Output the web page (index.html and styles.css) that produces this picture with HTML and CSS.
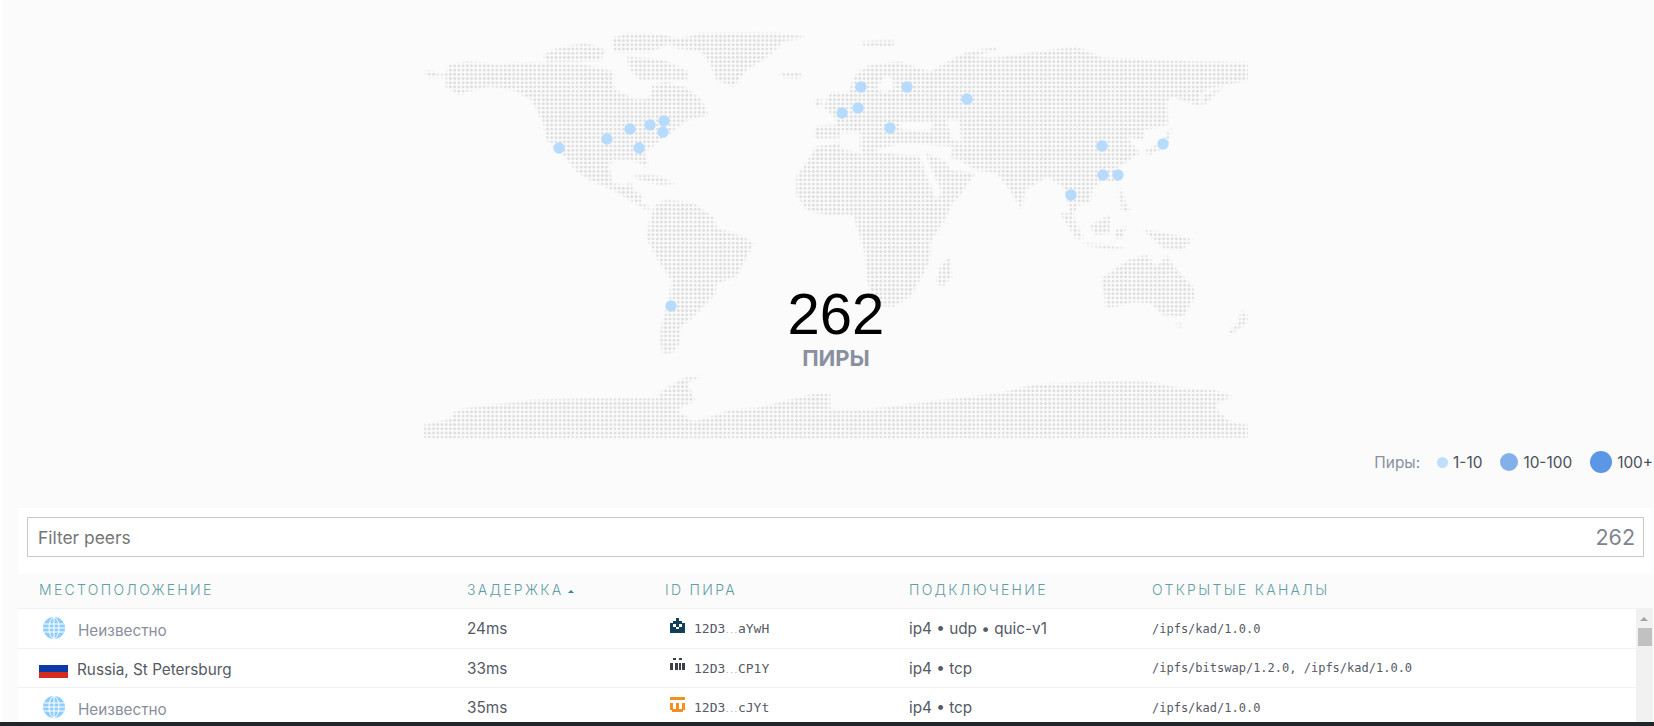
FILE: index.html
```html
<!DOCTYPE html>
<html lang="ru">
<head>
    <meta charset="UTF-8">
    <title>Пиры</title>
    <link rel="stylesheet" href="styles.css">
</head>
<body>
    <div class="page">
        <section class="map-wrap">
            <svg class="map" viewBox="424 30 824 410" width="824" height="410">
                <defs>
                    <pattern id="dots" x="423" y="30" width="4.22" height="4.22" patternUnits="userSpaceOnUse">
                        <circle cx="2.1" cy="2.1" r="1.45" fill="#dddddd"></circle>
                    </pattern>
                    <filter id="soft"><feGaussianBlur stdDeviation="0.9"></feGaussianBlur></filter>
                    <mask id="land" maskUnits="userSpaceOnUse" x="424" y="30" width="824" height="410">
                        <g fill="#fff" filter="url(#soft)">
                            <!-- north america -->
                            <g transform="translate(400 20) scale(.3333)">
                                <polygon points="72,152 110,155 115,165 140,160 145,135 210,125 300,135 350,130 430,130 560,135 640,155 640,190 645,210 710,240 750,235 755,195 800,185 860,205 905,240 925,285 860,300 805,345 775,365 735,395 745,445 720,430 690,420 640,420 625,435 640,490 680,500 690,480 700,510 725,525 725,550 760,565 735,568 650,515 570,480 535,460 490,405 440,360 430,310 395,240 340,210 270,200 200,215 130,250 180,225 135,200 140,172 85,170"></polygon>
                                <polygon points="635,55 680,40 790,45 860,60 800,75 750,95 640,95"></polygon>
                                <polygon points="430,105 470,85 560,70 620,90 600,120 520,125 440,125"></polygon>
                                <polygon points="680,110 790,120 865,155 860,180 770,180 720,180 690,150"></polygon>
                                <polygon points="800,65 900,40 1130,40 1220,50 1150,65 1110,105 1040,150 1000,200 950,180 930,130 905,95 830,85"></polygon>
                                <polygon points="1140,160 1205,158 1200,175 1150,172"></polygon>
                                <polygon points="700,465 760,465 830,490 780,495 720,480"></polygon>
                            </g>
                            <!-- south america and africa -->
                            <g transform="translate(600 180) scale(.3333)">
                                <polygon points="165,75 200,60 280,70 340,110 350,145 430,170 462,190 430,250 410,290 350,310 345,345 270,420 240,440 240,490 215,520 190,520 178,480 190,420 205,370 215,300 180,250 140,175 150,120"></polygon>
                                <polygon points="590,45 590,0 650,-90 980,-70 1005,40 1060,60 1040,110 990,190 990,240 960,300 930,350 880,380 820,375 800,290 795,220 770,140 760,105 680,105 620,90"></polygon>
                                <polygon points="1050,230 1055,290 1030,320 1010,310 1020,260"></polygon>
                            </g>
                            <!-- north africa and western europe -->
                            <g transform="translate(780 90) scale(.3333)">
                                <polygon points="50,260 110,170 210,150 260,165 300,190 330,190 410,205 420,300 50,300"></polygon>
                                <polygon points="105,110 170,105 165,85 130,50 150,10 390,0 390,100 345,130 280,110 240,105 180,145 105,145"></polygon>
                                <polygon points="105,30 125,25 125,50 105,50"></polygon>
                            </g>
                            <!-- asia -->
                            <g transform="translate(850 30) scale(.3333)">
                                <polygon points="0,170 20,130 60,105 150,95 240,125 330,75 430,85 530,70 680,50 760,85 900,90 1060,95 1195,100 1195,150 1100,170 1050,190 1050,230 970,200 950,215 955,285 880,300 880,330 830,320 870,370 800,415 810,460 760,450 725,480 720,520 690,520 665,560 650,510 640,470 590,440 525,480 515,540 480,480 440,430 380,420 300,385 310,350 200,340 150,340 40,370 30,310 0,300"></polygon>
                                <polygon points="205,360 290,395 300,420 375,430 320,510 260,530 230,470"></polygon>
                                <polygon points="880,365 935,335 965,290 955,345 900,375"></polygon>
                                <polygon points="1055,230 1060,195 1120,170 1070,220"></polygon>
                                <polygon points="30,35 130,30 130,50 45,48"></polygon>
                                <polygon points="340,70 440,50 440,60 350,85"></polygon>
                            </g>
                            <!-- oceania -->
                            <g transform="translate(1000 180) scale(.3333)">
                                <polygon points="180,100 215,100 250,175 230,178"></polygon>
                                <polygon points="270,135 330,105 330,160 285,165"></polygon>
                                <polygon points="250,188 310,195 380,205 340,210 265,198"></polygon>
                                <polygon points="345,150 380,140 365,175 345,175"></polygon>
                                <polygon points="355,15 375,60 390,95 365,90"></polygon>
                                <polygon points="430,150 500,160 580,180 545,210 490,205 450,170"></polygon>
                                <polygon points="305,295 385,240 440,225 470,260 500,225 530,270 580,320 585,350 550,410 490,405 450,370 410,365 320,385"></polygon>
                                <polygon points="525,432 550,430 540,445"></polygon>
                                <polygon points="725,390 745,410 740,430 690,465 685,455 715,430"></polygon>
                            </g>
                            <!-- antarctica -->
                            <g transform="translate(410 330) scale(.3333)">
                                <polygon points="40,285 130,265 125,250 170,235 380,210 550,205 740,205 760,180 820,145 880,135 830,160 855,210 800,240 850,275 920,255 960,240 1040,235 1160,205 1220,190 1260,190 1260,325 40,325"></polygon>
                            </g>
                            <g transform="translate(1000 180) scale(.3333)">
                                <polygon points="-770,775 -770,690 -400,690 0,640 100,615 300,605 440,605 540,625 640,630 700,650 650,670 650,690 690,725 745,735 745,773"></polygon>
                            </g>
                        </g>
                        <g fill="#000" filter="url(#soft)">
                            <!-- inland seas -->
                            <g transform="translate(850 30) scale(.3333)">
                                <polygon points="80,170 110,135 130,150 130,175 100,190"></polygon>
                                <polygon points="150,275 250,275 240,305 155,300"></polygon>
                                <polygon points="290,270 325,270 335,335 305,330"></polygon>
                                <polygon points="-30,300 20,325 40,375 -30,355"></polygon>
                                <polygon points="195,345 218,350 275,490 258,510"></polygon>
                                <polygon points="300,385 330,390 375,425 315,410"></polygon>
                            </g>
                        </g>
                    </mask>
                </defs>
                <rect x="424" y="30" width="824" height="410" fill="url(#dots)" mask="url(#land)"></rect>
                <g class="pins">
                    <circle cx="559" cy="148" r="5.7"></circle>
                    <circle cx="607" cy="139" r="5.7"></circle>
                    <circle cx="630" cy="129" r="5.7"></circle>
                    <circle cx="650" cy="125" r="5.7"></circle>
                    <circle cx="664" cy="121" r="5.7"></circle>
                    <circle cx="663" cy="132" r="5.7"></circle>
                    <circle cx="639" cy="148" r="5.7"></circle>
                    <circle cx="842" cy="113" r="5.7"></circle>
                    <circle cx="858" cy="108" r="5.7"></circle>
                    <circle cx="861" cy="87" r="5.7"></circle>
                    <circle cx="907" cy="87" r="5.7"></circle>
                    <circle cx="890" cy="128" r="5.7"></circle>
                    <circle cx="967" cy="99" r="5.7"></circle>
                    <circle cx="1102" cy="146" r="5.7"></circle>
                    <circle cx="1163" cy="144" r="5.7"></circle>
                    <circle cx="1103" cy="175" r="5.7"></circle>
                    <circle cx="1118" cy="175" r="5.7"></circle>
                    <circle cx="1071" cy="195" r="5.7"></circle>
                    <circle cx="671" cy="306" r="5.7"></circle>
                </g>
            </svg>
            <div class="peer-total">
                <div class="peer-total-num">262</div>
                <div class="peer-total-label">ПИРЫ</div>
            </div>
        </section>

        <div class="legend">
            <span class="legend-title">Пиры:</span>
            <span class="legend-item"><i class="dot dot-sm"></i>1-10</span>
            <span class="legend-item"><i class="dot dot-md"></i>10-100</span>
            <span class="legend-item"><i class="dot dot-lg"></i>100+</span>
        </div>

        <div class="filter-panel">
            <div class="filter-box">
                <span class="filter-placeholder">Filter peers</span>
                <span class="filter-count">262</span>
            </div>
        </div>

        <div class="table-head cols">
            <div>Местоположение</div>
            <div>Задержка<span class="sort-arrow"></span></div>
            <div>ID пира</div>
            <div>Подключение</div>
            <div>Открытые каналы</div>
        </div>

        <div class="table-body">
            <div class="rows">
                <div class="row row-first cols">
                    <div class="loc unknown">
                        <svg class="globe" viewBox="0 0 22 22"><use href="#globe-shape"></use></svg>
                        Неизвестно
                    </div>
                    <div class="cell">24ms</div>
                    <div class="peer-id">
                        <svg class="identicon" viewBox="0 0 15 15" shape-rendering="crispEdges">
                            <path fill="#123f59" d="M6 0h3v3h3v2h3v10H0V5h3V3h3z"></path>
                            <path fill="#fff" d="M3 6h3v3H3zM9 6h3v3H9zM6 9h3v2H6z"></path>
                        </svg>
                        <span>12D3<small>...</small>aYwH</span>
                    </div>
                    <div class="cell">ip4 • udp • quic-v1</div>
                    <div class="protocols">/ipfs/kad/1.0.0</div>
                </div>
                <div class="row cols">
                    <div class="loc">
                        <svg class="flag" viewBox="0 0 29 15" shape-rendering="crispEdges">
                            <rect y="2" width="29" height="6.5" fill="#0a3aa6"></rect>
                            <rect y="8.5" width="29" height="6.5" fill="#d52b1e"></rect>
                        </svg>
                        Russia, St Petersburg
                    </div>
                    <div class="cell">33ms</div>
                    <div class="peer-id">
                        <svg class="identicon" viewBox="0 0 15 15" shape-rendering="crispEdges">
                            <path fill="#3a3f4a" d="M3 0h3v2H3zM9 0h3v2H9zM0 5h3v7H0zM5 5h3v7H5zM9 5h2v7H9zM12 5h3v7h-3z"></path>
                        </svg>
                        <span>12D3<small>...</small>CP1Y</span>
                    </div>
                    <div class="cell">ip4 • tcp</div>
                    <div class="protocols">/ipfs/bitswap/1.2.0, /ipfs/kad/1.0.0</div>
                </div>
                <div class="row row-last cols">
                    <div class="loc unknown">
                        <svg class="globe" viewBox="0 0 22 22">
                            <g id="globe-shape">
                                <circle cx="11" cy="11" r="11" fill="#90cdff"></circle>
                                <g fill="none" stroke="#fff" stroke-width="1">
                                    <ellipse cx="11" cy="11" rx="5" ry="10.5"></ellipse>
                                    <path d="M11 0v22M1 7h20M1 15h20M0 11h22"></path>
                                </g>
                            </g>
                        </svg>
                        Неизвестно
                    </div>
                    <div class="cell">35ms</div>
                    <div class="peer-id">
                        <svg class="identicon" viewBox="0 0 15 15" shape-rendering="crispEdges">
                            <path fill="#f39021" d="M0 0h15v3H0zM0 6h15v9H0z"></path>
                            <path fill="#fff" d="M3 6h3v6H3zM9 6h3v6H9zM0 13h2v2H0zM13 13h2v2h-2z"></path>
                        </svg>
                        <span>12D3<small>...</small>cJYt</span>
                    </div>
                    <div class="cell">ip4 • tcp</div>
                    <div class="protocols">/ipfs/kad/1.0.0</div>
                </div>
            </div>
            <div class="scrollbar">
                <span class="scroll-up"></span>
                <span class="scroll-thumb"></span>
            </div>
        </div>

        <div class="bottom-bar"></div>
    </div>
</body>
</html>
```

FILE: styles.css
```css
* {
    box-sizing: border-box;
    margin: 0;
    padding: 0;
}

html, body {
    height: 100%;
    overflow: hidden;
}

body {
    background-color: #fbfbfb;
    font-family: 'Inter', sans-serif;
    color: #555a65;
}

.page {
    display: flex;
    flex-direction: column;
    height: 726px;
    padding: 0 1px 0 16px;
    border-left: 2px solid #fff;
}

.map-wrap {
    position: relative;
    width: 824px;
    height: 410px;
    margin: 30px 0 0 406px;
}

.map {
    display: block;
}

.pins circle {
    fill: #b7dbff;
}

.peer-total {
    position: absolute;
    left: 323px;
    top: 254px;
    width: 178px;
    text-align: center;
}

.peer-total-num {
    font-family: 'Liberation Sans', sans-serif;
    font-size: 58px;
    line-height: 60px;
    color: #000;
}

.peer-total-label {
    font-size: 22px;
    line-height: 28px;
    font-weight: 700;
    color: #8a909f;
}

.legend {
    display: flex;
    justify-content: flex-end;
    align-items: center;
    height: 24px;
    margin-top: 10px;
    font-size: 15.4px;
    color: #4a4f5a;
}

.legend-title {
    margin-right: 17px;
    color: #8a909f;
}

.legend-item {
    display: flex;
    align-items: center;
    gap: 5px;
    margin-left: 18px;
}

.legend-title + .legend-item {
    margin-left: 0;
}

.dot {
    display: block;
    border-radius: 50%;
}

.dot-sm {
    width: 11px;
    height: 11px;
    background-color: #bfdfff;
}

.dot-md {
    width: 18px;
    height: 18px;
    background-color: #84b0ea;
}

.dot-lg {
    width: 22px;
    height: 22px;
    background-color: #5b97e5;
}

.filter-panel {
    height: 66px;
    margin-top: 34px;
    padding: 9px 9px 17px 9px;
    background-color: #fff;
}

.filter-box {
    display: flex;
    justify-content: space-between;
    align-items: center;
    height: 40px;
    padding: 0 8px 0 10px;
    border: 1px solid #c8c8c8;
}

.filter-placeholder {
    font-size: 17.4px;
    color: #767676;
}

.filter-count {
    font-size: 21.5px;
    color: #7f8491;
}

.cols {
    display: grid;
    grid-template-columns: 428px 198px 244px 243px 1fr;
    padding-left: 21px;
}

.table-head {
    align-items: center;
    height: 35px;
    padding-bottom: 3px;
    font-size: 14px;
    font-weight: 300;
    letter-spacing: 2.3px;
    text-transform: uppercase;
    color: #5f9ea3;
    background-color: #fbfbfb;
    border-bottom: 1px solid #f1f1f1;
}

.sort-arrow {
    display: inline-block;
    margin-left: 4px;
    vertical-align: middle;
    border-left: 3px solid transparent;
    border-right: 3px solid transparent;
    border-bottom: 3px solid #2f8a8f;
}

.table-body {
    display: flex;
    height: 113px;
    background-color: #fff;
}

.rows {
    flex: 1;
    overflow: hidden;
}

.row {
    align-items: center;
    height: 39px;
    font-size: 15.3px;
    border-bottom: 1px solid #f1f1f1;
}

.row-first {
    height: 40px;
}

.row-last {
    border-bottom: none;
}

.loc {
    display: flex;
    align-items: center;
    margin-top: 3px;
}

.unknown {
    margin-left: 4px;
    color: #8a8f9c;
}

.globe {
    width: 22px;
    height: 22px;
    margin: -4px 13px 0 0;
}

.flag {
    width: 29px;
    height: 15px;
    margin: 1px 9px 0 0;
}

.peer-id {
    display: flex;
    align-items: center;
    gap: 9px;
    padding-left: 5px;
    font-family: 'DejaVu Sans Mono', monospace;
    font-size: 13px;
}

.peer-id small {
    font-size: 7px;
    color: #9a9ea8;
}

.identicon {
    width: 15px;
    height: 15px;
    margin-top: -6px;
}

.protocols {
    font-family: 'DejaVu Sans Mono', monospace;
    font-size: 12px;
    white-space: nowrap;
}

.scrollbar {
    position: relative;
    width: 17px;
    background-color: #f1f1f1;
}

.scroll-up {
    position: absolute;
    left: 4px;
    top: 8px;
    border-left: 4px solid transparent;
    border-right: 4px solid transparent;
    border-bottom: 4px solid #a3a3a3;
}

.scroll-thumb {
    position: absolute;
    left: 2px;
    top: 19px;
    width: 14px;
    height: 18px;
    background-color: #c1c1c1;
}

.bottom-bar {
    height: 4px;
    margin: 0 -1px 0 -18px;
    background-color: #20252c;
}
```
